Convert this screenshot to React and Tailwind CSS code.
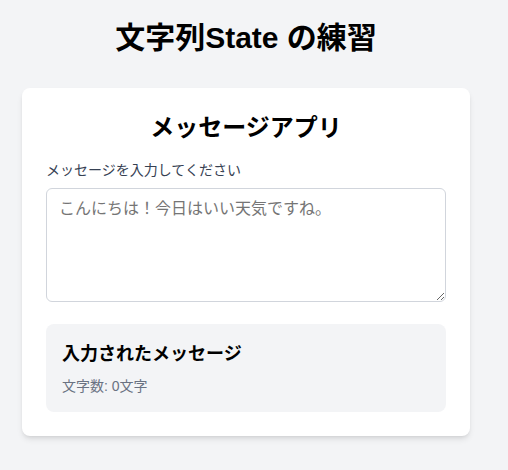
import React, { useState } from "react";

export default function App() {
  const [msg, setMsg] = useState("");
  return (
    <div
      className="min-h-screen bg-gray-100"
      style={{ fontFamily: '"Liberation Sans", "Noto Sans CJK JP", sans-serif' }}
    >
      <div className="w-[492px] pt-5 pb-8">
        <h1 className="text-3xl font-bold text-center text-black mb-8">文字列State の練習</h1>
        <div className="mx-auto w-[448px] bg-white rounded-lg shadow-md p-6">
          <h2 className="text-2xl font-bold text-center text-black mb-4">メッセージアプリ</h2>
          <label className="block text-sm text-gray-700 mb-2">メッセージを入力してください</label>
          <textarea
            value={msg}
            onChange={(e) => setMsg(e.target.value)}
            rows={4}
            placeholder="こんにちは！今日はいい天気ですね。"
            className="block w-full h-[114px] px-3 py-2 border border-gray-300 rounded-md text-base text-gray-900 placeholder:text-[#757575]"
          />
          <div className="mt-[22px] bg-gray-100 rounded-lg p-4">
            <h3 className="text-lg font-bold text-black mb-2">入力されたメッセージ</h3>
            <p className="text-sm text-gray-500">文字数: {msg.length}文字</p>
          </div>
        </div>
      </div>
    </div>
  );
}
